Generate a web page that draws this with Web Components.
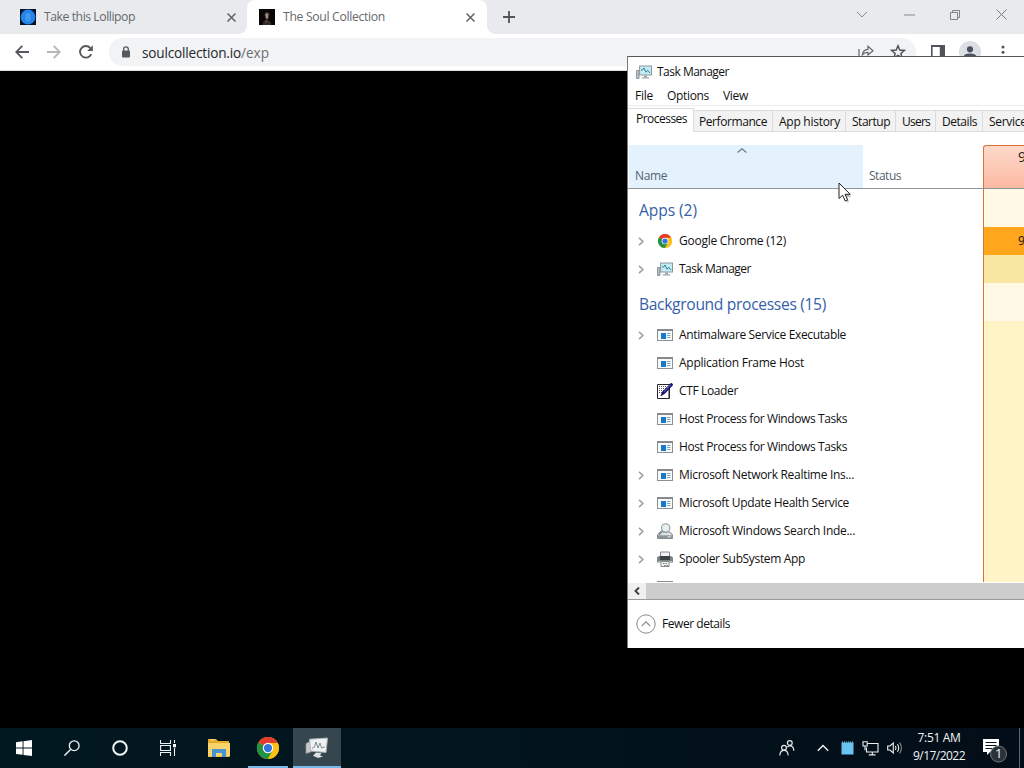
<!DOCTYPE html>
<html lang="en">
<head>
  <meta charset="utf-8">
  <title>Desktop</title>
  <style>
    body {
      margin: 0;
      overflow: hidden;
      font-family: "Open Sans", "Noto Sans", sans-serif;
    }
  </style>
</head>
<body>
  <win-desktop>
    <chrome-browser></chrome-browser>
    <task-manager></task-manager>
    <win-taskbar slot="taskbar"></win-taskbar>
  </win-desktop>

  <script>
    const CHROME_LOGO = `
      <circle cx="12" cy="12" r="12" fill="#fbc116"/>
      <path d="M12 12 1.6 6A12 12 0 0 1 22.4 6Z" fill="#e33b2e"/>
      <path d="M1.6 6A12 12 0 0 0 12 24L17.2 15 12 12Z" fill="#229342"/>
      <path d="M12 6.5H22.7A12 12 0 0 1 12 24L17 14.8Z" fill="#fbc116"/>
      <circle cx="12" cy="12" r="5.7" fill="#fff"/>
      <circle cx="12" cy="12" r="4.5" fill="#3474e0"/>`;

    // each entry: [viewBox, markup]
    const ICONS = {
      close: ["0 0 10 10", `<path d="M1.4 1.4 8.6 8.6M8.6 1.4 1.4 8.6" stroke="#5f6368" stroke-width="1.4"/>`],
      plus: ["0 0 12 12", `<path d="M6 0V12M0 6H12" stroke="#505459" stroke-width="1.8"/>`],
      lollipop: ["0 0 16 16", `<rect width="16" height="16" fill="#031226"/><circle cx="8" cy="8" r="7.4" fill="#2383e8"/><path d="M6.2 4.5V10Q6.2 12 8 12T9.8 10V4.5M8 4V10" stroke="#6ab4f5" stroke-width=".8" fill="none"/>`],
      soul: ["0 0 16 16", `<rect width="16" height="16" fill="#080607"/><path d="M5.5 5Q6 2.5 8.5 3T10.5 6L10 9 8.7 11 12 13V16H4V13L7 11 6 8.5Z" fill="#382c29"/><path d="M6.2 5.5Q8 3.2 9.3 5.2L8.8 9.8 7.1 9.2Z" fill="#a58d84"/><path d="M6.5 11.5 8 13.5" stroke="#6e5b55"/>`],
      back: ["0 0 14 14", `<path d="M14 7H1.5M7.3 .9 1.2 7 7.3 13.1" fill="none" stroke="#55595e" stroke-width="1.8"/>`],
      forward: ["0 0 14 14", `<path d="M0 7H12.5M6.7 .9 12.8 7 6.7 13.1" fill="none" stroke="#b5b7ba" stroke-width="1.8"/>`],
      reload: ["0 0 14 14", `<path d="M12.2 9.1A5.8 5.8 0 1 1 11.3 3.1" fill="none" stroke="#55595e" stroke-width="1.9"/><path d="M13.8 .3V6H8.2Z" fill="#55595e"/>`],
      lock: ["0 0 10 12", `<rect x="1" y="4.4" width="8" height="7.2" rx="1" fill="#55595e"/><path d="M2.7 5V3.2a2.3 2.3 0 0 1 4.6 0V5" fill="none" stroke="#55595e" stroke-width="1.3"/>`],
      share: ["0 0 16 14", `<path d="M1 4V13H12" fill="none" stroke="#63676c" stroke-width="1.2"/><path d="M4.3 10Q4.8 4.6 10 4.3V1.3L15 5.8 10 10V7.3Q6.4 7.2 4.3 10Z" fill="none" stroke="#63676c" stroke-width="1.2"/>`],
      star: ["0 0 16 16", `<path d="M8 1.8 9.8 6 14.3 6.4 10.9 9.4 11.9 13.9 8 11.5 4.1 13.9 5.1 9.4 1.7 6.4 6.2 6Z" fill="none" stroke="#505459" stroke-width="1.5"/>`],
      panel: ["0 0 14 14", `<path d="M0 0H14V14H0ZM1.6 2V12H8.8V2Z" fill="#505459" fill-rule="evenodd"/>`],
      person: ["0 0 22 22", `<circle cx="11" cy="11" r="11" fill="#dcdfe4"/><circle cx="11" cy="8.3" r="3.1" fill="#4b5160"/><path d="M5 17V15Q5 12.4 11 12.4T17 15V17Z" fill="#4b5160"/>`],
      dots: ["0 0 4 16", `<circle cx="2" cy="3" r="1.5" fill="#505459"/><circle cx="2" cy="8.2" r="1.5" fill="#505459"/><circle cx="2" cy="13.4" r="1.5" fill="#505459"/>`],
      chevdown: ["0 0 12 7", `<path d="M1 .8 6 6 11 .8" fill="none" stroke="#86888c"/>`],
      minimize: ["0 0 11 2", `<path d="M0 1H11" stroke="#86888c"/>`],
      restore: ["0 0 10 10", `<path d="M.5 2.5H7.5V9.5H.5ZM2.5 2V.5H9.5V7.5H8" fill="none" stroke="#808286"/>`],
      xwin: ["0 0 11 11", `<path d="M.5 .5 10.5 10.5M10.5 .5 .5 10.5" stroke="#77797d"/>`],
      taskmgr: ["0 0 16 14", `<path d="M.5 5.5H3V13.5H.5Z" fill="#b8bfc3" stroke="#7e878c" stroke-width=".8"/><rect x="3.6" y="1" width="11.9" height="9" fill="#c4ecf6" stroke="#8e9699"/><path d="M5 5H6.5L8 3 10 7.2 11.7 5.3 14 8" fill="none" stroke="#2b7f94"/><path d="M8 10.5H11V12H8ZM5.8 12.2H13V13.4H5.8Z" fill="#9ba2a6"/>`],
      chrome: ["0 0 24 24", CHROME_LOGO],
      exe: ["0 0 16 12", `<rect x=".5" y=".5" width="15" height="11" fill="#fafafa" stroke="#8d9093"/><path d="M0 0H16V2H0Z" fill="#858a8d"/><rect x="4" y="4" width="5" height="6" fill="#1678c8"/><path d="M10 4.5H13.5M10 6.5H13.5M10 8.5H13.5" stroke="#75a9c9"/>`],
      ctf: ["0 0 16 16", `<path d="M.5 1.5H12.5V15.5H.5Z" fill="#fff" stroke="#26262b"/><path d="M2 3.5H10M2 5.5H9M2 7.5H7M2 9.5H6" stroke="#555" stroke-dasharray="1 1"/><path d="M14.3 0 16 1.7 8.3 10 3.8 13 5.5 8.8Z" fill="#12127c" stroke="#08083a" stroke-width=".6"/><path d="M13.6 1.8 7 8.8" stroke="#7a7ad0"/><path d="M12.2 6V15" stroke="#26262b" stroke-width="1.4"/>`],
      indexer: ["0 0 16 16", `<path d="M3 9H13L15.6 12V15.5H.5V12Z" fill="#dfe2e3" stroke="#83898b"/><path d="M1 12.3H15.3V15.2H1Z" fill="#8e9496"/><path d="M10.5 13.8H13.8" stroke="#e9efef"/><path d="M5.6 7.5 2 11.6" stroke="#8a8f92" stroke-width="1.8"/><circle cx="8.7" cy="4.9" r="4.2" fill="#e5f0f1" stroke="#979da0" stroke-width="1.1"/>`],
      printer: ["0 0 16 16", `<path d="M3.5 1H12.5V6H3.5Z" fill="#f1f1f1" stroke="#85898b"/><path d="M0 6.5 2 5H14L16 6.5V11.5H0Z" fill="#7e8385"/><path d="M3 5H13V9H3Z" fill="#3c4043"/><path d="M1 10.5H15" stroke="#b5babc"/><path d="M4 10.5H12V15.5H4Z" fill="#f4f4f4" stroke="#85898b"/><path d="M6 12.5H10M7 14.5H11" stroke="#777" stroke-dasharray="1.5 1"/>`],
      expand: ["0 0 6 9", `<path d="M1 .8 4.9 4.5 1 8.2" fill="none" stroke="#a0a0a0" stroke-width="1.6"/>`],
      sort: ["0 0 10 5", `<path d="M.6 4.5 5 .8 9.4 4.5" fill="none" stroke="#6a7780" stroke-width="1.1"/>`],
      scrollleft: ["0 0 6 8", `<path d="M5 .5 1.5 4 5 7.5" fill="none" stroke="#3f3f3f" stroke-width="1.9"/>`],
      fewer: ["0 0 20 20", `<circle cx="10" cy="10" r="9.2" fill="#fff" stroke="#888"/><path d="M5.8 12 10 7.8 14.2 12" fill="none" stroke="#999" stroke-width="1.4"/>`],
      cursor: ["0 0 14 22", `<path d="M3 4 13.5 14.5 9 15.5 11 19.8 9 20.5Z" fill="#000" opacity=".25"/><path d="M1 1V16.5L4.6 13.2 7.2 19 9.6 18 7.1 12.3H12.2Z" fill="#fff" stroke="#222"/>`],
      start: ["0 0 16 16", `<path d="M0 2.2 6.6 1.3V7.6H0ZM7.5 1.2 16 0V7.6H7.5ZM0 8.5H6.6V14.8L0 13.9ZM7.5 8.5H16V16L7.5 14.9Z" fill="#fff"/>`],
      search: ["0 0 16 16", `<circle cx="10.2" cy="5.7" r="4.9" fill="none" stroke="#eef2f3" stroke-width="1.3"/><path d="M6.8 9.3.5 15.6" stroke="#eef2f3" stroke-width="1.4"/>`],
      cortana: ["0 0 16 16", `<circle cx="8" cy="8" r="6.8" fill="none" stroke="#f2f5f6" stroke-width="2"/>`],
      taskview: ["0 0 16 16", `<path d="M.5 0V3.5H10.5V0M.5 16V12.5H10.5V16M.6 5.5H10.4V10.5H.6Z" fill="none" stroke="#eef2f3" stroke-width="1.1"/><path d="M14.5 0V3M14.5 8V16" stroke="#eef2f3" stroke-width="1.1"/><path d="M13 4H16V7.3H13Z" fill="#fff"/>`],
      folder: ["0 0 22 20", `<path d="M0 1H8L10 3H21V19H0Z" fill="#e7a926"/><path d="M0 5H22V18.5H0Z" fill="#fad46b"/><path d="M4 11H18V19H14V15H8V19H4Z" fill="#4793cf"/><path d="M2 1.8H7" stroke="#fbe6a2"/>`],
      taskmgrbig: ["0 0 24 22", `<path d="M1 6.5 6 4V15L1 16.5Z" fill="#c8cbcc" stroke="#8c9294" stroke-width=".7"/><path d="M4.5 2.2 22.5 1 21 15.5 5.5 14Z" fill="#eff2f2" stroke="#a9b0b2"/><path d="M7 11.5 9.5 10 11 5 13 11 15 6 16.5 11 20 9.8" fill="none" stroke="#71828a" stroke-width=".9"/><path d="M11 15.5 16.5 16 15 18.5 18 19.5 13 21 8 18.8Z" fill="#dcdfe0"/>`],
      people: ["0 0 16 16", `<g fill="none" stroke="#e6e9ea" stroke-width="1.2"><circle cx="5" cy="7.8" r="2.4"/><path d="M.9 15.5Q.9 10.4 5 10.4T9.1 15.5"/><circle cx="10.8" cy="3" r="2.4"/><path d="M8.2 7.2Q9.2 5.8 10.8 5.8 14.8 5.8 14.8 10.8"/></g>`],
      chevup: ["0 0 12 8", `<path d="M.8 6.8 6 1.4 11.2 6.8" fill="none" stroke="#eef0f1" stroke-width="1.4"/>`],
      bluebox: ["0 0 13 14", `<path d="M.5 1.5H12.5V13.5H.5Z" fill="#69c4f3"/><path d="M1 1H12" stroke="#a4def9" stroke-dasharray="1 1"/>`],
      network: ["0 0 17 15", `<g fill="none" stroke="#eef0f1" stroke-width="1.1"><path d="M5.5 2.5H16V11H4.5V6.5M10.3 11V13.8M6.8 13.9H13.5"/><path d="M1 .8H5.2V5H1ZM3 5V9.2"/></g>`],
      volume: ["0 0 16 14" , `<g fill="none" stroke="#eef0f1" stroke-width="1.1"><path d="M.7 5H3L6.3 2V12L3 9H.7Z"/><path d="M8.4 5Q9.7 7 8.4 9M10.4 3.2Q13 7 10.4 10.8"/><path d="M12.6 1.6Q16.2 7 12.6 12.4" opacity=".55"/></g>`],
      action: ["0 0 26 26", `<path d="M1 2H17V15H8L5 18V15H1Z" fill="#fff"/><path d="M3.5 5.5H14.5M3.5 8.5H14.5M3.5 11.5H10" stroke="#0a1420" stroke-width="1.1"/><circle cx="16.5" cy="17" r="8" fill="#2b333a" stroke="#70777c"/>`]
    };

    function shadow(el, html) {
      el.attachShadow({ mode: "open" }).innerHTML = html;
    }

    class WinDesktop extends HTMLElement {
      constructor() {
        super();
        shadow(this, `
          <style>
            :host { display: flex; flex-direction: column; position: relative; width: 1024px; height: 768px; overflow: hidden; background: #000; }
            main { flex: 1; min-height: 0; }
            ui-icon { position: absolute; left: 838px; top: 182px; }
          </style>
          <main><slot></slot></main>
          <slot name="taskbar"></slot>
          <ui-icon name="cursor" w="14" h="22"></ui-icon>
        `);
      }
    }

    class BrowserTab extends HTMLElement {
      constructor() {
        super();
        shadow(this, `
          <style>
            :host { display: flex; align-items: center; box-sizing: border-box; height: 34px; color: #64686c; padding: 0 10px 0 20px; }
            :host([active]) { background: #fff; border-radius: 8px 8px 0 0; padding: 0 11px 0 12px; position: relative; }
            :host([active])::before, :host([active])::after {
              content: ""; position: absolute; bottom: 0; width: 8px; height: 8px;
            }
            :host([active])::before { left: -8px; background: radial-gradient(circle at 0 0, transparent 7.5px, #fff 8px); }
            :host([active])::after { right: -8px; background: radial-gradient(circle at 100% 0, transparent 7.5px, #fff 8px); }
            slot { display: block; }
            .title { flex: 1; padding: 0 0 1px 8px; }
          </style>
          <ui-icon name="${this.getAttribute("icon")}" w="16" h="16"></ui-icon>
          <div class="title"><slot></slot></div>
          <ui-icon name="close" w="11" h="11"></ui-icon>
        `);
      }
    }

    class ChromeBrowser extends HTMLElement {
      constructor() {
        super();
        shadow(this, `
          <style>
            :host { display: block; }
            .strip { display: flex; align-items: center; height: 34px; background: #e8eaed; }
            .plus { margin-left: 16px; flex: 1; }
            .first { width: 247px; }
            .second { width: 240px; }
            .controls { display: flex; align-items: center; gap: 35.5px; padding: 0 17.5px 5px 0; }
            .bar { display: flex; align-items: center; height: 36px; background: #fff; border-bottom: 1px solid #dcdfe2; }
            .nav { display: flex; gap: 18px; padding-left: 15px; width: 94px; }
            .omni { display: flex; align-items: center; box-sizing: border-box; width: 807px; height: 28px; border-radius: 14px; background: #f1f3f4; padding: 0 10px 0 12px; color: #25282c; }
            .url { display: flex; flex: 1; padding-left: 11px; }
            .path { color: #6b6f73; }
            .share { margin-right: 16px; }
            .end { display: flex; align-items: center; gap: 20px; padding-left: 15px; }
            .end .me { margin: 0 0 0 -6px; }
          </style>
          <div class="strip">
            <browser-tab class="first" icon="lollipop"><ui-text w="91" size="12.2">Take this Lollipop</ui-text></browser-tab>
            <browser-tab class="second" icon="soul" active><ui-text w="102" size="12.2">The Soul Collection</ui-text></browser-tab>
            <ui-icon class="plus" name="plus" w="12" h="12"></ui-icon>
            <div class="controls">
              <ui-icon name="chevdown" w="12" h="7"></ui-icon>
              <ui-icon name="minimize" w="11" h="2"></ui-icon>
              <ui-icon name="restore" w="10" h="10"></ui-icon>
              <ui-icon name="xwin" w="11" h="11"></ui-icon>
            </div>
          </div>
          <div class="bar">
            <div class="nav">
              <ui-icon name="back" w="14" h="14"></ui-icon>
              <ui-icon name="forward" w="14" h="14"></ui-icon>
              <ui-icon name="reload" w="14" h="14"></ui-icon>
            </div>
            <div class="omni">
              <ui-icon name="lock" w="10" h="12"></ui-icon>
              <div class="url"><ui-text w="99" size="13.6">soulcollection.io</ui-text><ui-text class="path" w="28" size="13.6">/exp</ui-text></div>
              <ui-icon class="share" name="share" w="16" h="14"></ui-icon>
              <ui-icon name="star" w="16" h="16"></ui-icon>
            </div>
            <div class="end">
              <ui-icon name="panel" w="14" h="14"></ui-icon>
              <ui-icon class="me" name="person" w="22" h="22"></ui-icon>
              <ui-icon name="dots" w="4" h="16"></ui-icon>
            </div>
          </div>
        `);
      }
    }

    class ProcessGroup extends HTMLElement {
      constructor() {
        super();
        shadow(this, `
          <style>
            :host { display: grid; grid-template-columns: 355px 1fr; height: 38px; color: #3560aa; }
            .name { display: flex; align-items: center; padding: 4px 0 0 11px; }
            .cpu { background: #fff9e5; border-left: 1px solid #d9703c; }
          </style>
          <div class="name"><slot></slot></div>
          <div class="cpu"></div>
        `);
      }
    }

    class ProcessRow extends HTMLElement {
      constructor() {
        super();
        const icon = this.getAttribute("icon");
        const w = icon === "chrome" ? 14 : 16;
        const h = icon === "exe" ? 12 : icon === "taskmgr" || icon === "chrome" ? 14 : 16;
        shadow(this, `
          <style>
            :host { display: grid; grid-template-columns: 355px 1fr; height: 28px; color: #111; }
            .name { display: grid; grid-template-columns: 19px 22px 1fr; align-items: center; padding-left: 10px; }
            .arrow { visibility: hidden; }
            :host([expandable]) .arrow { visibility: visible; }
            .cpu { background: var(--heat, #fff4c5); border-left: 1px solid #d9703c; display: flex; align-items: center; padding-left: 34px; }
            .pic { width: 16px; display: flex; justify-content: center; }
            ::slotted(ui-text) { padding-bottom: 2px; }
          </style>
          <div class="name">
            <ui-icon class="arrow" name="expand" w="6" h="9"></ui-icon>
            <div class="pic"><ui-icon name="${icon}" w="${w}" h="${h}"></ui-icon></div>
            <slot></slot>
          </div>
          <div class="cpu"><slot name="cpu"></slot></div>
        `);
      }
    }

    const processes = [
      ["exe", "Antimalware Service Executable", 167, true],
      ["exe", "Application Frame Host", 125, false],
      ["ctf", "CTF Loader", 59, false],
      ["exe", "Host Process for Windows Tasks", 168, false],
      ["exe", "Host Process for Windows Tasks", 168, false],
      ["exe", "Microsoft Network Realtime Ins...", 175, true],
      ["exe", "Microsoft Update Health Service", 170, true],
      ["indexer", "Microsoft Windows Search Inde...", 176, true],
      ["printer", "Spooler SubSystem App", 126, true]
    ];

    const tabs = [
      ["Performance", 68, 79],
      ["App history", 61, 73],
      ["Startup", 38, 50],
      ["Users", 28, 40],
      ["Details", 35, 47],
      ["Services", 43, 55]
    ];

    class TaskManager extends HTMLElement {
      constructor() {
        super();
        shadow(this, `
          <style>
            :host {
              position: absolute; left: 627px; top: 56px; width: 640px; height: 592px;
              box-sizing: border-box; display: flex; flex-direction: column;
              background: #fff; border-top: 1px solid #55585b; border-left: 1px solid #77797b; color: #111;
            }
            .title { display: flex; align-items: center; gap: 5px; height: 29px; padding-left: 8px; }
            .menu { display: flex; align-items: center; gap: 14px; height: 19px; padding-left: 7px; border-bottom: 1px solid #ececec; }
            .tabs { display: flex; align-items: flex-end; height: 25px; border-bottom: 1px solid #dcdcdc; }
            .tab { box-sizing: border-box; height: 21px; border: 1px solid #dcdcdc; border-width: 1px 1px 0 0; background: #f2f2f2; padding-left: 6px; display: flex; align-items: center; }
            .tab.on { width: 66px; height: 24px; background: #fff; padding: 0 0 4px 8px; margin-bottom: -1px; }
            .tab.on + .tab { padding-left: 5px; }
            .head { display: grid; grid-template-columns: 234px 120px 1fr; height: 43px; margin-top: 13px; padding-left: 1px; border-bottom: 1px solid #8e9699; color: #56646f; }
            .col { display: flex; flex-direction: column; justify-content: space-between; padding: 3px 0 4px 6px; }
            .name { background: #e3f2fd; }
            .status { justify-content: flex-end; }
            .sort { align-self: center; margin-right: 14px; }
            .cpu { background: linear-gradient(#fdd9ca, #fcb9a2); border: 1px solid #d9703c; border-width: 1px 0 0 1px; border-radius: 3px 0 0 0; padding: 1px 0 0 34px; color: #222; }
            .list { height: 393px; overflow: hidden; }
            .scroll { display: flex; height: 18px; background: #cdcdcd; border-top: 1px solid #fff; border-bottom: 1px solid #9b9b9b; box-sizing: border-box; }
            .scroll div { width: 18px; background: #f0f0f0; display: flex; align-items: center; justify-content: center; }
            .foot { flex: 1; display: flex; align-items: center; gap: 6px; padding: 0 0 1px 8px; }
            .foot ui-text { padding-bottom: 1px; }
          </style>
          <div class="title"><ui-icon name="taskmgr" w="16" h="14"></ui-icon><ui-text w="72">Task Manager</ui-text></div>
          <div class="menu"><ui-text w="18">File</ui-text><ui-text w="42">Options</ui-text><ui-text w="25">View</ui-text></div>
          <div class="tabs">
            <div class="tab on"><ui-text w="51">Processes</ui-text></div>
            ${tabs.map(([label, w, full]) => `<div class="tab" style="width:${full}px"><ui-text w="${w}">${label}</ui-text></div>`).join("")}
          </div>
          <div class="head">
            <div class="col name"><ui-icon class="sort" name="sort" w="10" h="5"></ui-icon><ui-text w="32">Name</ui-text></div>
            <div class="col status"><ui-text w="32">Status</ui-text></div>
            <div class="cpu"><ui-text w="28" size="14">93%</ui-text></div>
          </div>
          <div class="list">
            <process-group><ui-text w="58" size="15.6">Apps (2)</ui-text></process-group>
            <process-row icon="chrome" expandable style="--heat:#ffa61c"><ui-text w="107">Google Chrome (12)</ui-text><ui-text slot="cpu" w="30">90.1%</ui-text></process-row>
            <process-row icon="taskmgr" expandable style="--heat:#f9e8a4"><ui-text w="72">Task Manager</ui-text></process-row>
            <process-group><ui-text w="187" size="15.6">Background processes (15)</ui-text></process-group>
            ${processes.map(([icon, label, w, open]) => `<process-row icon="${icon}" ${open ? "expandable" : ""}><ui-text w="${w}">${label}</ui-text></process-row>`).join("")}
            <process-row icon="exe"></process-row>
          </div>
          <div class="scroll"><div><ui-icon name="scrollleft" w="6" h="8"></ui-icon></div></div>
          <div class="foot"><ui-icon name="fewer" w="20" h="20"></ui-icon><ui-text w="68">Fewer details</ui-text></div>
        `);
      }
    }

    class TaskbarButton extends HTMLElement {
      constructor() {
        super();
        const size = this.getAttribute("size") || 16;
        shadow(this, `
          <style>
            :host { display: flex; align-items: center; justify-content: center; box-sizing: border-box; width: 48px; height: 40px; }
            :host([running]) { background: linear-gradient(#76b9ed, #76b9ed) center bottom / 40px 2px no-repeat; }
            :host([active]) { background: linear-gradient(#76b9ed, #76b9ed) center bottom / 48px 2px no-repeat #35464e; }
          </style>
          <ui-icon name="${this.getAttribute("icon")}" w="${size}" h="${this.getAttribute("height") || size}"></ui-icon>
        `);
      }
    }

    class WinTaskbar extends HTMLElement {
      constructor() {
        super();
        shadow(this, `
          <style>
            :host { display: flex; justify-content: space-between; height: 40px; background: linear-gradient(90deg, #021820, #02141d 50%, #030d18); color: #f2f4f5; }
            .left { display: flex; }
            .pinned { display: flex; gap: 1px; margin-left: 3px; }
            .tray { display: flex; align-items: center; }
            .people { margin-right: 22px; }
            .up { margin-right: 12px; }
            .net { margin: 0 8px; }
            .clock { display: flex; flex-direction: column; align-items: center; width: 52px; margin: 0 17px 0 10px; padding-bottom: 2px; line-height: 18px; }
            .action { display: grid; place-items: center; margin-right: 11px; padding-top: 3px; }
            .action > * { grid-area: 1 / 1; }
            .action ui-text { margin: 7px 0 0 7px; }
            .peek { width: 4px; height: 40px; border-left: 1px solid #5d666d; }
          </style>
          <div class="left">
            <taskbar-button icon="start"></taskbar-button>
            <taskbar-button icon="search"></taskbar-button>
            <taskbar-button icon="cortana"></taskbar-button>
            <taskbar-button icon="taskview"></taskbar-button>
            <div class="pinned">
              <taskbar-button icon="folder" size="22" height="20"></taskbar-button>
              <taskbar-button icon="chrome" size="22" running></taskbar-button>
              <taskbar-button icon="taskmgrbig" size="24" height="22" active></taskbar-button>
            </div>
          </div>
          <div class="tray">
            <ui-icon class="people" name="people" w="16" h="16"></ui-icon>
            <ui-icon class="up" name="chevup" w="12" h="8"></ui-icon>
            <ui-icon name="bluebox" w="13" h="14"></ui-icon>
            <ui-icon class="net" name="network" w="17" h="15"></ui-icon>
            <ui-icon name="volume" w="16" h="14"></ui-icon>
            <div class="clock"><ui-text w="43">7:51 AM</ui-text><ui-text w="52">9/17/2022</ui-text></div>
            <div class="action"><ui-icon name="action" w="26" h="26"></ui-icon><ui-text w="7" size="13">1</ui-text></div>
            <div class="peek"></div>
          </div>
        `);
      }
    }

    class UiIcon extends HTMLElement {
      connectedCallback() {
        if (this.shadowRoot) return;
        const [box, body] = ICONS[this.getAttribute("name")];
        shadow(this, `
          <style>
            :host { display: block; flex: none; }
            svg { display: block; }
          </style>
          <svg width="${this.getAttribute("w")}" height="${this.getAttribute("h")}" viewBox="${box}" fill="none">${body}</svg>
        `);
      }
    }

    // Single line label whose tracking is adjusted to fill the given width
    class UiText extends HTMLElement {
      connectedCallback() {
        if (this.shadowRoot) return;
        const width = Number(this.getAttribute("w"));
        shadow(this, `
          <style>
            :host { display: block; flex: none; width: ${width}px; font-size: ${this.getAttribute("size") || 12}px; white-space: nowrap; }
            span { display: inline-block; }
          </style>
          <span><slot></slot></span>
        `);
        const span = this.shadowRoot.querySelector("span");
        const natural = span.getBoundingClientRect().width;
        span.style.letterSpacing = (width - natural) / this.textContent.length + "px";
      }
    }

    customElements.define("win-desktop", WinDesktop);
    customElements.define("browser-tab", BrowserTab);
    customElements.define("chrome-browser", ChromeBrowser);
    customElements.define("process-group", ProcessGroup);
    customElements.define("process-row", ProcessRow);
    customElements.define("task-manager", TaskManager);
    customElements.define("taskbar-button", TaskbarButton);
    customElements.define("win-taskbar", WinTaskbar);
    customElements.define("ui-icon", UiIcon);
    customElements.define("ui-text", UiText);
  </script>
</body>
</html>
